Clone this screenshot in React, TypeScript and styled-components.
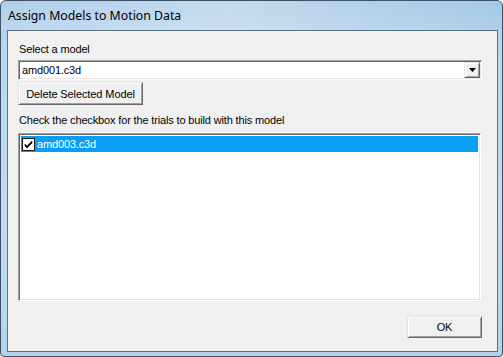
import styled, { createGlobalStyle } from "styled-components";

const GlobalStyle = createGlobalStyle`
    html, body {
        margin: 0;
        padding: 0;
        background: #ffffff;
    }
`

const Window = styled.div`
    width: 503px;
    height: 357px;
    box-sizing: border-box;
    display: flex;
    flex-direction: column;
    border: 1px solid #3f5265;
    border-radius: 6px 6px 4px 4px;
    overflow: hidden;
    background: linear-gradient(180deg, #a6c9e7 0%, #b8d6ee 12%, #c2dcf1 60%, #b5d3eb 100%);
`

const TitleBar = styled.div`
    height: 29px;
    flex: none;
    display: flex;
    align-items: center;
    padding-left: 7px;
    font-family: "Segoe UI", "Noto Sans", sans-serif;
    font-size: 12.3px;
    color: #000;
    background: linear-gradient(90deg, rgba(255,255,255,0.12) 0%, rgba(255,255,255,0.3) 45%, rgba(160,195,225,0.2) 100%);
`

const Frame = styled.div`
    flex: 1;
    display: flex;
    padding: 0 4px 4px 6px;
`

const Client = styled.div`
    flex: 1;
    display: flex;
    flex-direction: column;
    border: 1px solid #5d7186;
    background: #f0f0f0;
    padding: 12px 15px 13px 10px;
    font-family: "Liberation Sans", Arial, sans-serif;
    font-size: 11px;
    letter-spacing: -0.15px;
    color: #000;
`

const Label = styled.div<{ $gap: number }>`
    height: 13px;
    line-height: 13px;
    padding-left: 1px;
    margin-bottom: ${p => p.$gap}px;
`

const Sunken = styled.div`
    box-sizing: border-box;
    background: #fff;
    border: 1px solid;
    border-color: #a0a0a0 #ffffff #ffffff #a0a0a0;
    box-shadow: inset 1px 1px #696969, inset -1px -1px #e3e3e3;
`

const Combo = styled(Sunken)`
    height: 20px;
    display: flex;
    align-items: center;
    padding: 1px 1px 1px 3px;
`

const ComboText = styled.span`
    flex: 1;
    line-height: 16px;
`

const Raised = styled.button`
    box-sizing: border-box;
    background: #f0f0f0;
    border: 1px solid;
    border-color: #e3e3e3 #696969 #696969 #e3e3e3;
    box-shadow: inset 1px 1px #ffffff, inset -1px -1px #a0a0a0;
    font-family: "Liberation Sans", Arial, sans-serif;
    font-size: 11px;
    letter-spacing: -0.1px;
    color: #000;
    padding: 0;
    display: flex;
    align-items: center;
    justify-content: center;
`

const DropButton = styled(Raised)`
    width: 16px;
    height: 16px;
`

const PushButton = styled(Raised)<{ $w: number; $h: number }>`
    width: ${p => p.$w}px;
    height: ${p => p.$h}px;
`

const List = styled(Sunken)`
    flex: 1;
    margin-right: 1px;
    padding: 2px;
`

const Row = styled.div<{ $selected?: boolean }>`
    height: 16px;
    display: flex;
    align-items: center;
    gap: 2px;
    padding-left: 1px;
    background: ${p => (p.$selected ? "#0a9df5" : "transparent")};
    color: ${p => (p.$selected ? "#fff" : "#000")};
`

const CheckBox = styled.span`
    box-sizing: border-box;
    width: 13px;
    height: 13px;
    background: #fff;
    border: 1px solid #1c1c1c;
    display: flex;
    align-items: center;
    justify-content: center;
`

const Footer = styled.div`
    display: flex;
    justify-content: flex-end;
    margin-top: 15px;
`

export default function App() {
    return (
        <>
            <GlobalStyle />
            <Window>
                <TitleBar>Assign Models to Motion Data</TitleBar>
                <Frame>
                    <Client>
                        <Label $gap={4}>Select a model</Label>
                        <Combo>
                            <ComboText>amd001.c3d</ComboText>
                            <DropButton>
                                <svg width="7" height="4" viewBox="0 0 7 4">
                                    <path d="M0 0h7L3.5 4z" fill="#000" />
                                </svg>
                            </DropButton>
                        </Combo>
                        <PushButton $w={125} $h={23} style={{ marginTop: 2 }}>Delete Selected Model</PushButton>
                        <Label $gap={6} style={{ marginTop: 9 }}>Check the checkbox for the trials to build with this model</Label>
                        <List>
                            <Row $selected>
                                <CheckBox>
                                    <svg width="9" height="9" viewBox="0 0 9 9">
                                        <path d="M1 4l2 2 5-5v2l-5 5-2-2z" fill="#000" stroke="#000" strokeWidth="0.6" />
                                    </svg>
                                </CheckBox>
                                amd003.c3d
                            </Row>
                        </List>
                        <Footer>
                            <PushButton $w={75} $h={22}>OK</PushButton>
                        </Footer>
                    </Client>
                </Frame>
            </Window>
        </>
    )
}
